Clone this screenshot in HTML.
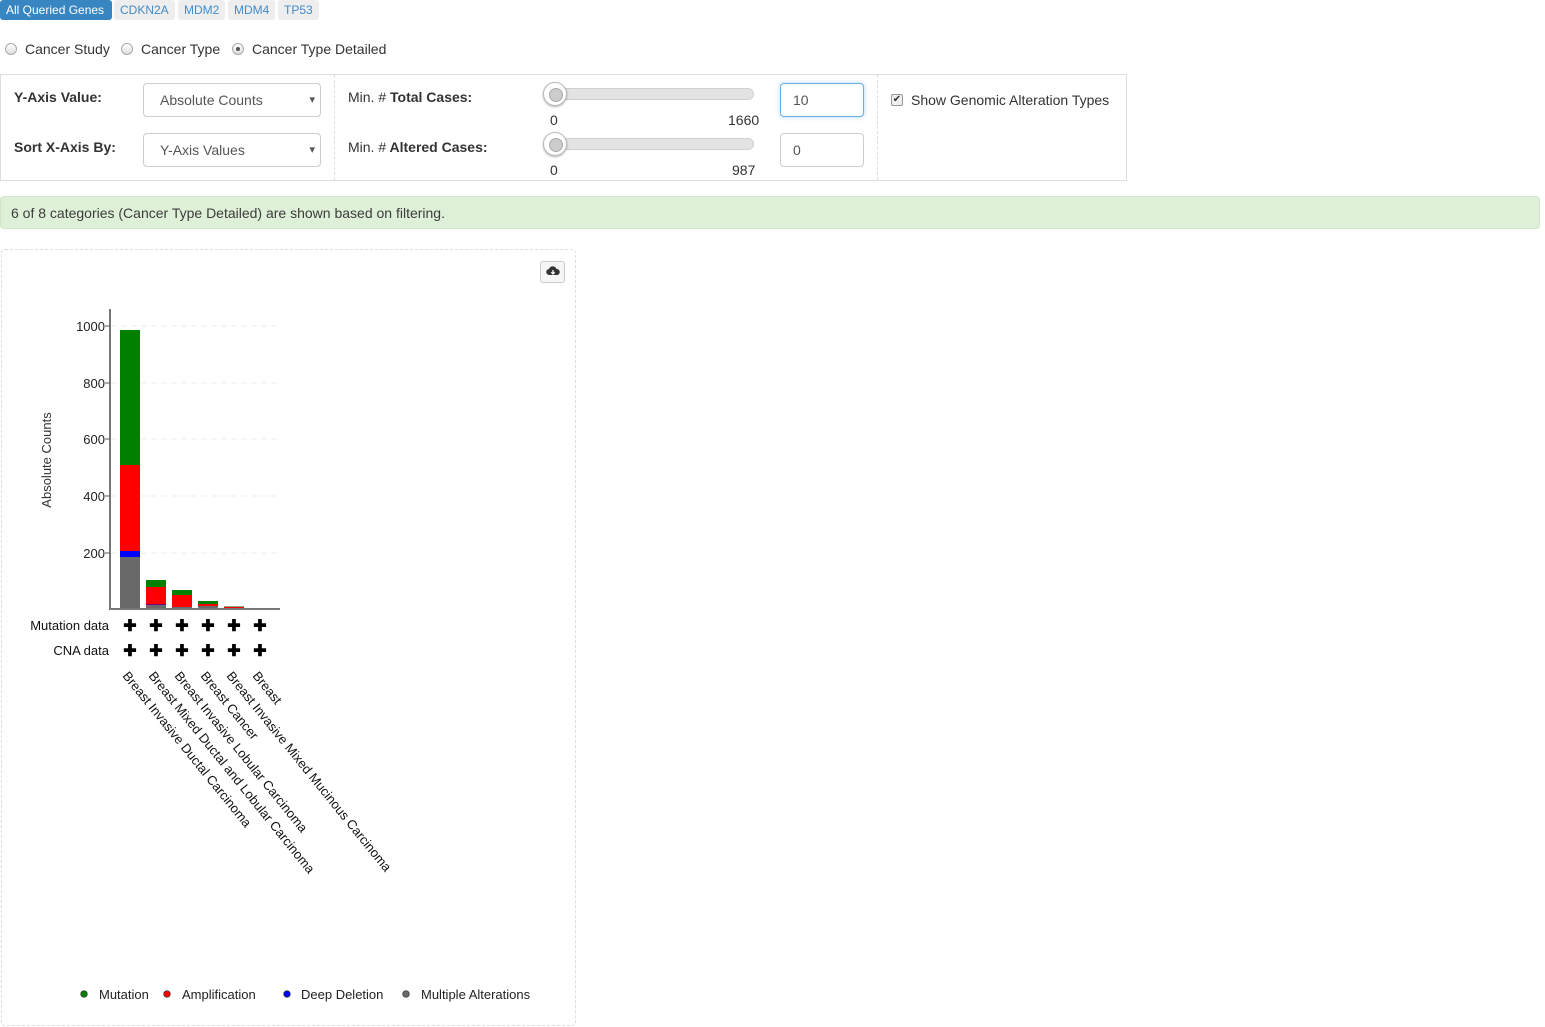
<!DOCTYPE html>
<html><head><meta charset="utf-8">
<style>
*{box-sizing:border-box}
body{margin:0;width:1545px;height:1027px;position:relative;font-family:"Liberation Sans",sans-serif;font-size:14px;color:#333;background:#fff;overflow:hidden}
.abs{position:absolute}
.tab{position:absolute;top:0;height:20px;line-height:20px;font-size:12px;color:#428bca;background:#eee;border-radius:3px;padding:0 6px}
.tab.act{background:#3786c2;color:#fff}
.radio{position:absolute;top:43px;width:12px;height:12px;border-radius:50%;border:1px solid #aaa;background:linear-gradient(#fff,#ddd)}
.lbl{font-weight:bold;font-size:14px;position:absolute}
.sel{position:absolute;left:143px;width:178px;height:34px;border:1px solid #ccc;border-radius:4px;padding-left:16px;line-height:32px;color:#555;font-size:14px}
.sel:after{content:"▾";position:absolute;right:5px;top:0;font-size:11px;color:#555}
.track{position:absolute;left:546px;width:208px;height:12px;border-radius:6px;background:#e3e3e3;border:1px solid #d0d0d0}
.knob{position:absolute;left:543px;width:24px;height:24px;border-radius:50%;background:#fff;border:1px solid #bbb;box-shadow:0 1px 2px rgba(0,0,0,.3)}
.knob:after{content:"";position:absolute;left:5px;top:5px;width:12px;height:12px;border-radius:50%;background:#ccc;border:1px solid #aaa}
.inp{position:absolute;left:780px;width:84px;height:34px;border:1px solid #ccc;border-radius:4px;padding-left:12px;line-height:32px;color:#555}
</style></head><body>
<div class="tab act" style="left:0;width:112px">All Queried Genes</div>
<div class="tab" style="left:114px">CDKN2A</div>
<div class="tab" style="left:178px">MDM2</div>
<div class="tab" style="left:228px">MDM4</div>
<div class="tab" style="left:278px">TP53</div>

<div class="radio" style="left:5px"></div><div class="abs" style="left:25px;top:41px">Cancer Study</div>
<div class="radio" style="left:121px"></div><div class="abs" style="left:141px;top:41px">Cancer Type</div>
<div class="radio" style="left:232px"><div style="position:absolute;left:3px;top:3px;width:4px;height:4px;border-radius:50%;background:#555"></div></div><div class="abs" style="left:252px;top:41px">Cancer Type Detailed</div>

<div class="abs" style="left:0;top:74px;width:1127px;height:107px;border:1px solid #ddd"></div>
<div class="abs" style="left:334px;top:75px;height:105px;border-left:1px dashed #ddd"></div>
<div class="abs" style="left:877px;top:75px;height:105px;border-left:1px dashed #ddd"></div>
<div class="lbl" style="left:14px;top:89px">Y-Axis Value:</div>
<div class="lbl" style="left:14px;top:139px">Sort X-Axis By:</div>
<div class="sel" style="top:83px">Absolute Counts</div>
<div class="sel" style="top:133px">Y-Axis Values</div>
<div class="lbl" style="left:348px;top:89px"><span style="font-weight:normal">Min. #</span> Total Cases:</div>
<div class="lbl" style="left:348px;top:139px"><span style="font-weight:normal">Min. #</span> Altered Cases:</div>
<div class="track" style="top:88px"></div><div class="knob" style="top:82px"></div>
<div class="track" style="top:138px"></div><div class="knob" style="top:132px"></div>
<div class="abs" style="left:550px;top:112px">0</div><div class="abs" style="left:728px;top:112px">1660</div>
<div class="abs" style="left:550px;top:162px">0</div><div class="abs" style="left:732px;top:162px">987</div>
<div class="inp" style="top:83px;border-color:#66afe9;box-shadow:0 0 5px rgba(102,175,233,.5)">10</div>
<div class="inp" style="top:133px">0</div>
<div class="abs" style="left:891px;top:94px;width:12px;height:12px;border:1px solid #999;border-radius:2px;background:#eee;font-size:10px;line-height:10px;text-align:center">✔</div>
<div class="abs" style="left:911px;top:92px">Show Genomic Alteration Types</div>

<div class="abs" style="left:0;top:196px;width:1540px;height:33px;background:#dff0d8;border:1px solid #d0e4c8;border-radius:4px;padding:8px 10px;color:#3c3c3c">6 of 8 categories (Cancer Type Detailed) are shown based on filtering.</div>

<div class="abs" style="left:1px;top:249px;width:575px;height:777px;border:1px dashed #ddd;border-radius:4px"></div>
<div class="abs" style="left:540px;top:261px;width:25px;height:22px;border:1px solid #ccc;border-radius:3px;background:#f5f5f5"></div>
<svg class="abs" style="left:546px;top:265px" width="14" height="12" viewBox="0 0 14 12"><path d="M3.5 10 A3 3 0 0 1 3 4 A4 4 0 0 1 10.5 4 A3 3 0 0 1 11 10 Z" fill="#333"/><path d="M7 5 V9 M5.3 7.3 L7 9 L8.7 7.3" stroke="#fff" stroke-width="1.3" fill="none"/></svg>

<svg class="abs" style="left:0;top:0" width="600" height="1027" font-family="Liberation Sans,sans-serif">
<g stroke="#eee" stroke-dasharray="6,4">
<line x1="111" x2="280" y1="326" y2="326"/><line x1="111" x2="280" y1="383" y2="383"/><line x1="111" x2="280" y1="439" y2="439"/><line x1="111" x2="280" y1="496" y2="496"/><line x1="111" x2="280" y1="553" y2="553"/>
</g>
<rect x="120" y="557" width="20" height="52" fill="#696969"/>
<rect x="120" y="551" width="20" height="6" fill="#0000ff"/>
<rect x="120" y="465" width="20" height="86" fill="#ff0000"/>
<rect x="120" y="330" width="20" height="135" fill="#008000"/>
<rect x="146" y="605" width="20" height="4" fill="#696969"/>
<rect x="146" y="604.5" width="20" height="0.5" fill="#0000ff"/>
<rect x="146" y="587" width="20" height="17.5" fill="#ff0000"/>
<rect x="146" y="580" width="20" height="7" fill="#008000"/>
<rect x="172" y="607" width="20" height="2" fill="#696969"/>
<rect x="172" y="595" width="20" height="12" fill="#ff0000"/>
<rect x="172" y="590" width="20" height="5" fill="#008000"/>
<rect x="198" y="606" width="20" height="3" fill="#696969"/>
<rect x="198" y="604" width="20" height="2" fill="#ff0000"/>
<rect x="198" y="601" width="20" height="3" fill="#008000"/>
<rect x="224" y="607" width="20" height="2" fill="#ff0000"/>
<rect x="224" y="606" width="20" height="1" fill="#8a8"/>
<rect x="250" y="608" width="20" height="1" fill="#008000"/>
<line x1="110" y1="309" x2="110" y2="610" stroke="#777" stroke-width="2"/>
<line x1="109" y1="609" x2="280" y2="609" stroke="#777" stroke-width="2"/>
<g font-size="13" fill="#222" text-anchor="end">
<text x="105" y="331">1000</text><text x="105" y="388">800</text><text x="105" y="444">600</text><text x="105" y="501">400</text><text x="105" y="558">200</text>
</g>
<g stroke="#555"><line x1="105" x2="110" y1="326" y2="326"/><line x1="105" x2="110" y1="383" y2="383"/><line x1="105" x2="110" y1="439" y2="439"/><line x1="105" x2="110" y1="496" y2="496"/><line x1="105" x2="110" y1="553" y2="553"/></g>
<text transform="translate(51,460) rotate(-90)" font-size="13" fill="#333" text-anchor="middle">Absolute Counts</text>
<g font-size="13" fill="#111" text-anchor="end"><text x="109" y="630">Mutation data</text><text x="109" y="655">CNA data</text></g>
<g font-size="16" font-weight="bold" fill="#000" text-anchor="middle">
<text x="130" y="631">✚</text><text x="156" y="631">✚</text><text x="182" y="631">✚</text><text x="208" y="631">✚</text><text x="234" y="631">✚</text><text x="260" y="631">✚</text>
<text x="130" y="656">✚</text><text x="156" y="656">✚</text><text x="182" y="656">✚</text><text x="208" y="656">✚</text><text x="234" y="656">✚</text><text x="260" y="656">✚</text>
</g>
<g font-size="13" fill="#111">
<text transform="translate(122,676) rotate(51)">Breast Invasive Ductal Carcinoma</text>
<text transform="translate(148,676) rotate(51)">Breast Mixed Ductal and Lobular Carcinoma</text>
<text transform="translate(174,676) rotate(51)">Breast Invasive Lobular Carcinoma</text>
<text transform="translate(200,676) rotate(51)">Breast Cancer</text>
<text transform="translate(226,676) rotate(51)">Breast Invasive Mixed Mucinous Carcinoma</text>
<text transform="translate(252,676) rotate(51)">Breast</text>
</g>
<g stroke="#333" stroke-width="0.7">
<circle cx="84" cy="994" r="3.3" fill="#008000"/><circle cx="167" cy="994" r="3.3" fill="#ff0000"/><circle cx="287" cy="994" r="3.3" fill="#0000ff"/><circle cx="406" cy="994" r="3.3" fill="#696969"/>
</g>
<g font-size="13" fill="#222"><text x="99" y="999">Mutation</text><text x="182" y="999">Amplification</text><text x="301" y="999">Deep Deletion</text><text x="421" y="999">Multiple Alterations</text></g>
</svg>
</body></html>
